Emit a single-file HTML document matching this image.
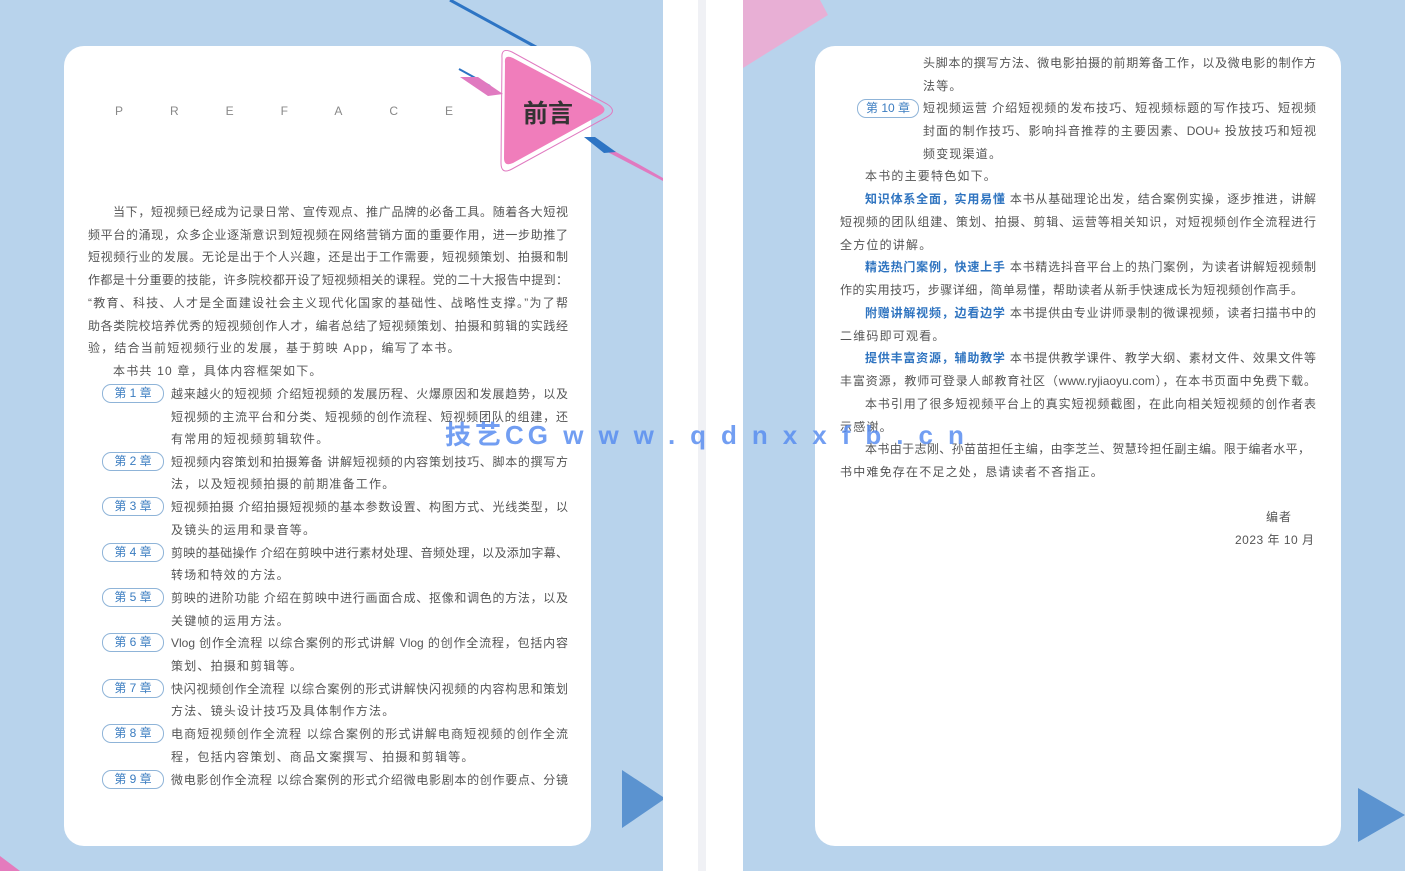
<!DOCTYPE html>
<html><head><meta charset="utf-8"><style>
body{margin:0;width:1405px;height:871px;position:relative;overflow:hidden;background:#fff;font-family:"Liberation Sans","Noto Sans CJK SC",sans-serif;}
.abs{position:absolute}
.l{position:absolute;height:22px;line-height:22px;font-size:12px;color:#555;white-space:nowrap;text-align:justify;text-align-last:justify;}
.n{text-align-last:left}
.tag{position:absolute;left:102px;width:60px;height:17px;border:1px solid #8fb4d8;border-radius:9px;color:#3a7cc0;font-size:12px;line-height:17px;text-align:center;}
b{color:#2f74c0}
</style></head><body>
<div class="abs" style="left:0;top:0;width:663px;height:871px;background:#b8d3ec"></div>
<div class="abs" style="left:743px;top:0;width:662px;height:871px;background:#b8d3ec"></div>
<div class="abs" style="left:698px;top:0;width:8px;height:871px;background:#f0f1f5"></div>
<svg class="abs" style="left:0;top:0" width="1405" height="871">
<line x1="450" y1="0" x2="545" y2="52" stroke="#2d74c4" stroke-width="3"/>
<polygon points="743,0 820,0 828,15 743,68" fill="#e8afd5"/>
<polygon points="0,856 20,871 0,871" fill="#e47bbd"/>
<polygon points="622,770 663,797 663,800 622,828" fill="#5b93d0"/>
<polygon points="1358,788 1405,815 1358,842" fill="#5b93d0"/>
</svg>
<div class="abs" style="left:64px;top:46px;width:527px;height:800px;background:#fff;border-radius:20px"></div>
<div class="abs" style="left:815px;top:46px;width:526px;height:800px;background:#fff;border-radius:20px"></div>
<svg class="abs" style="left:0;top:0" width="700" height="200">
<line x1="459" y1="69" x2="490" y2="86" stroke="#2d74c4" stroke-width="2"/>
<polygon points="460,77 478,77 503,94 488,96" fill="#e07ac0"/>
<polygon points="594,140 640,165 663,178 663,181 598,147" fill="#e07ac0"/>
<polygon points="584,137 595,137 616,152 604,153" fill="#2d74c4"/>
<path d="M502,58 Q501,47 512,52 L607,104 Q618,111 607,117 L512,169 Q501,175 501,163 Z" fill="none" stroke="#e07ac0" stroke-width="1"/>
<path d="M505,63 Q504,54 513,58 L600,104 Q609,110 600,115 L513,163 Q504,167 504,158 Z" fill="#f07dbb"/>
<text x="523" y="122" font-size="25" font-weight="bold" fill="#333" font-family="Noto Sans CJK SC,sans-serif">前言</text>
</svg>
<div class="abs" style="left:115px;top:104px;font-size:12px;color:#888;letter-spacing:47px">PREFACE</div>

<div class="l" style="left:113px;top:201px;width:455px">当下，短视频已经成为记录日常、宣传观点、推广品牌的必备工具。随着各大短视</div>
<div class="l" style="left:88px;top:224px;width:480px">频平台的涌现，众多企业逐渐意识到短视频在网络营销方面的重要作用，进一步助推了</div>
<div class="l" style="left:88px;top:246px;width:480px">短视频行业的发展。无论是出于个人兴趣，还是出于工作需要，短视频策划、拍摄和制</div>
<div class="l" style="left:88px;top:269px;width:480px">作都是十分重要的技能，许多院校都开设了短视频相关的课程。党的二十大报告中提到：</div>
<div class="l" style="left:88px;top:292px;width:480px">“教育、科技、人才是全面建设社会主义现代化国家的基础性、战略性支撑。”为了帮</div>
<div class="l" style="left:88px;top:315px;width:480px">助各类院校培养优秀的短视频创作人才，编者总结了短视频策划、拍摄和剪辑的实践经</div>
<div class="l n" style="left:88px;top:337px;letter-spacing:1.2px">验，结合当前短视频行业的发展，基于剪映 App，编写了本书。</div>
<div class="l n" style="left:113px;top:360px;letter-spacing:1.2px">本书共 10 章，具体内容框架如下。</div>

<div class="tag" style="top:384px">第 1 章</div>
<div class="l" style="left:171px;top:383px;width:397px">越来越火的短视频 介绍短视频的发展历程、火爆原因和发展趋势，以及</div>
<div class="l" style="left:171px;top:406px;width:397px">短视频的主流平台和分类、短视频的创作流程、短视频团队的组建，还</div>
<div class="l n" style="left:171px;top:428px;letter-spacing:1.2px">有常用的短视频剪辑软件。</div>
<div class="tag" style="top:452px">第 2 章</div>
<div class="l" style="left:171px;top:451px;width:397px">短视频内容策划和拍摄筹备 讲解短视频的内容策划技巧、脚本的撰写方</div>
<div class="l n" style="left:171px;top:473px;letter-spacing:1.2px">法，以及短视频拍摄的前期准备工作。</div>
<div class="tag" style="top:497px">第 3 章</div>
<div class="l" style="left:171px;top:496px;width:397px">短视频拍摄 介绍拍摄短视频的基本参数设置、构图方式、光线类型，以</div>
<div class="l n" style="left:171px;top:519px;letter-spacing:1.2px">及镜头的运用和录音等。</div>
<div class="tag" style="top:543px">第 4 章</div>
<div class="l" style="left:171px;top:542px;width:397px">剪映的基础操作 介绍在剪映中进行素材处理、音频处理，以及添加字幕、</div>
<div class="l n" style="left:171px;top:564px;letter-spacing:1.2px">转场和特效的方法。</div>
<div class="tag" style="top:588px">第 5 章</div>
<div class="l" style="left:171px;top:587px;width:397px">剪映的进阶功能 介绍在剪映中进行画面合成、抠像和调色的方法，以及</div>
<div class="l n" style="left:171px;top:610px;letter-spacing:1.2px">关键帧的运用方法。</div>
<div class="tag" style="top:633px">第 6 章</div>
<div class="l" style="left:171px;top:632px;width:397px">Vlog 创作全流程 以综合案例的形式讲解 Vlog 的创作全流程，包括内容</div>
<div class="l n" style="left:171px;top:655px;letter-spacing:1.2px">策划、拍摄和剪辑等。</div>
<div class="tag" style="top:679px">第 7 章</div>
<div class="l" style="left:171px;top:678px;width:397px">快闪视频创作全流程 以综合案例的形式讲解快闪视频的内容构思和策划</div>
<div class="l n" style="left:171px;top:700px;letter-spacing:1.2px">方法、镜头设计技巧及具体制作方法。</div>
<div class="tag" style="top:724px">第 8 章</div>
<div class="l" style="left:171px;top:723px;width:397px">电商短视频创作全流程 以综合案例的形式讲解电商短视频的创作全流</div>
<div class="l n" style="left:171px;top:746px;letter-spacing:1.2px">程，包括内容策划、商品文案撰写、拍摄和剪辑等。</div>
<div class="tag" style="top:770px">第 9 章</div>
<div class="l" style="left:171px;top:769px;width:397px">微电影创作全流程 以综合案例的形式介绍微电影剧本的创作要点、分镜</div>

<div class="l" style="left:923px;top:52px;width:393px">头脚本的撰写方法、微电影拍摄的前期筹备工作，以及微电影的制作方</div>
<div class="l n" style="left:923px;top:75px;letter-spacing:1.2px">法等。</div>
<div class="tag" style="left:857px;top:99px">第 10 章</div>
<div class="l" style="left:923px;top:97px;width:393px">短视频运营 介绍短视频的发布技巧、短视频标题的写作技巧、短视频</div>
<div class="l" style="left:923px;top:120px;width:393px">封面的制作技巧、影响抖音推荐的主要因素、DOU+ 投放技巧和短视</div>
<div class="l n" style="left:923px;top:143px;letter-spacing:1.2px">频变现渠道。</div>
<div class="l n" style="left:865px;top:165px;letter-spacing:1.2px">本书的主要特色如下。</div>
<div class="l" style="left:865px;top:188px;width:451px"><b>知识体系全面，实用易懂</b> 本书从基础理论出发，结合案例实操，逐步推进，讲解</div>
<div class="l" style="left:840px;top:211px;width:476px">短视频的团队组建、策划、拍摄、剪辑、运营等相关知识，对短视频创作全流程进行</div>
<div class="l n" style="left:840px;top:234px;letter-spacing:1.2px">全方位的讲解。</div>
<div class="l" style="left:865px;top:256px;width:451px"><b>精选热门案例，快速上手</b> 本书精选抖音平台上的热门案例，为读者讲解短视频制</div>
<div class="l" style="left:840px;top:279px;width:463px">作的实用技巧，步骤详细，简单易懂，帮助读者从新手快速成长为短视频创作高手。</div>
<div class="l" style="left:865px;top:302px;width:451px"><b>附赠讲解视频，边看边学</b> 本书提供由专业讲师录制的微课视频，读者扫描书中的</div>
<div class="l n" style="left:840px;top:325px;letter-spacing:1.2px">二维码即可观看。</div>
<div class="l" style="left:865px;top:347px;width:451px"><b>提供丰富资源，辅助教学</b> 本书提供教学课件、教学大纲、素材文件、效果文件等</div>
<div class="l" style="left:840px;top:370px;width:476px">丰富资源，教师可登录人邮教育社区（www.ryjiaoyu.com），在本书页面中免费下载。</div>
<div class="l" style="left:865px;top:393px;width:451px">本书引用了很多短视频平台上的真实短视频截图，在此向相关短视频的创作者表</div>
<div class="l n" style="left:840px;top:416px;letter-spacing:1.2px">示感谢。</div>
<div class="l" style="left:865px;top:438px;width:445px">本书由于志刚、孙苗苗担任主编，由李芝兰、贺慧玲担任副主编。限于编者水平，</div>
<div class="l n" style="left:840px;top:461px;letter-spacing:1.2px">书中难免存在不足之处，恳请读者不吝指正。</div>
<div class="l n" style="left:1266px;top:506px;letter-spacing:1px">编者</div>
<div class="l n" style="left:1235px;top:529px;letter-spacing:.5px">2023 年 10 月</div>

<div class="abs" style="left:445px;top:420px;font-size:26px;font-weight:bold;color:#5a8ef0;opacity:.85;white-space:nowrap;line-height:30px;letter-spacing:4px">技艺CG <span style="letter-spacing:15px">www.qdnxxfb.cn</span></div>
</body></html>
